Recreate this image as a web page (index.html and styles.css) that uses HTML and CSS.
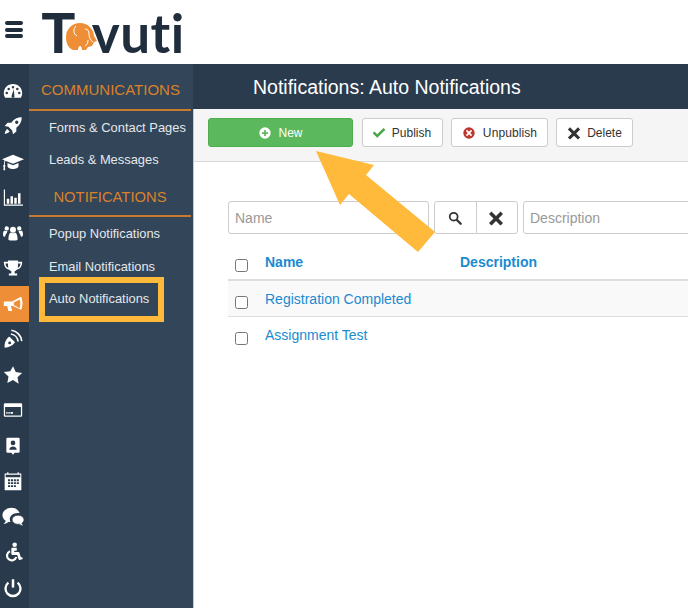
FILE: index.html
```html
<!DOCTYPE html>
<html lang="en">
<head>
    <meta charset="UTF-8">
    <meta name="viewport" content="width=device-width, initial-scale=1.0">
    <title>Notifications: Auto Notifications</title>
    <link rel="stylesheet" href="styles.css">
</head>
<body>
    <header class="topbar">
        <div class="burger"><span></span><span></span><span></span></div>
        <div class="logo">
            <span class="logo-t">T</span>
            <svg class="logo-mark" viewBox="0 0 32 28">
                <path fill="#ee8e37" d="M15 0a14 14 0 0 1 14 13l3 5-3 1-2 4-4 1-2 3h-4c0-2-1-4-2-4s-2 2-2 4H8C3 25 1 20 1 14A14 14 0 0 1 15 0z"/>
                <path fill="none" stroke="#fff" stroke-width="1" d="M11 3c-3 3-3 8 1 10M20 6c3 0 4 2 4 5s1 6 4 8M20 23c2-1 3-3 3-6"/>
            </svg>
            <span class="logo-rest">vuti</span>
        </div>
    </header>

    <div class="layout">
        <nav class="rail">
            <a class="rail-item"><svg viewBox="0 0 24 24"><path fill-rule="evenodd" d="M12 3.500C5.500 3.500 1 8.500 1 14.500c0 2 .6 4 1.500 5.500h19c.9-1.500 1.500-3.500 1.500-5.500 0-6-4.500-11-11-11zM12 6a1.500 1.500 0 1 1 0 3 1.500 1.500 0 0 1 0-3zM6.800 8a1.500 1.500 0 1 1 0 3 1.500 1.500 0 0 1 0-3zm10.400 0a1.500 1.500 0 1 1 0 3 1.500 1.500 0 0 1 0-3zM4.500 13a1.500 1.500 0 1 1 0 3 1.500 1.500 0 0 1 0-3zm15 0a1.500 1.500 0 1 1 0 3 1.500 1.500 0 0 1 0-3zM13 10l.6 7.500a1.800 1.800 0 1 1-3.200 0z"/></svg></a>
            <a class="rail-item"><svg viewBox="0 0 24 24"><path d="M22.500 1.500c-5 0-9.500 2-12.500 6.500H5.500L2 12l4.500 1 4.500 4.500 1 4.500 4-3.500V14c4.500-3 6.500-7.500 6.500-12.500zM16.500 5.500a2 2 0 1 1 0 4 2 2 0 0 1 0-4zM5 15.500c-1.500 1-2.500 3-3 6 3-.5 5-1.500 6-3z"/></svg></a>
            <a class="rail-item"><svg class="wide" viewBox="0 0 24 24"><path d="M12 4 0 9l2.600 1.100-.4 5a1.200 1.200 0 0 0-.4 2.200L1.500 21h2l-.3-3.700a1.200 1.200 0 0 0-.1-2l.4-4.800L12 14l12-5zM6 13v3.500c0 1.500 3 3 6 3s6-1.500 6-3V13l-6 2.500z"/></svg></a>
            <a class="rail-item"><svg viewBox="0 0 24 24"><path d="M1 3h1.400v18H24v1.500H1zM4.500 14h3v6h-3zM9 11h3v9H9zM13.500 13h3v7h-3zM18 7.500h3V20h-3z"/></svg></a>
            <a class="rail-item"><svg viewBox="0 0 24 24"><circle cx="12" cy="8" r="3.600"/><circle cx="4.500" cy="6.500" r="2.600"/><circle cx="19.500" cy="6.500" r="2.600"/><path d="M6.500 20c0-5 1-8 3-8.500 1.500 1 3.500 1 5 0 2 .5 3 3.500 3 8.500-2 1.500-9 1.500-11 0zM0 14c0-3 .5-4.500 2-5 1 .7 2 .8 3.500.5-.5.7-.8 1.500-.8 2.500-1.200 1-2 3-2.200 4.500C1.500 16.500 0 16 0 14zM24 14c0-3-.5-4.500-2-5-1 .7-2 .8-3.500.5.500.7.800 1.500.800 2.500 1.200 1 2 3 2.200 4.500 1 0 2.500-.500 2.500-2.500z"/></svg></a>
            <a class="rail-item"><svg viewBox="0 0 24 24"><path fill-rule="evenodd" d="M6 3h12v1.500h5c0 5-2 8.500-6.500 9.500-.8 1-1.700 1.600-2.500 2v2.500h3V21H7v-2.500h3V16c-.8-.4-1.700-1-2.500-2C3 13 1 9.500 1 4.500h5zM3 6.500c.2 2.500 1.200 4.300 3.300 5.300C6.200 10.500 6 8.500 6 6.500zm18 0h-3c0 2-.2 4-.3 5.300 2.100-1 3.100-2.800 3.300-5.300z"/></svg></a>
            <a class="rail-item active"><svg viewBox="0 0 24 24"><path fill-rule="evenodd" d="M1 9h10l10-5.500c1 0 1.500.5 1.500 1.500l1 6-1 6c0 1-.5 1.500-1.500 1.500L12 14.500H9.500L11 20.500H6.500L5 14.500H1zM20 6.500 13 10.300v2.900l7 3.800c.5-1.700.8-3.400.8-5.250S20.500 8.200 20 6.500z"/></svg></a>
            <a class="rail-item"><svg viewBox="0 0 24 24"><path fill-rule="evenodd" d="M2 22.500c-.5-5 .8-9.500 5.500-13.500l7 7c-3.500 4.500-7.500 6.500-12.500 6.500zm6-7.500a1.700 1.700 0 1 0 0 3.400A1.700 1.700 0 0 0 8 15z"/><path fill="none" stroke="#fff" stroke-width="2" d="M9.500 6a10 10 0 0 1 8.500 9M10 1.500a14.500 14.500 0 0 1 12.500 13"/></svg></a>
            <a class="rail-item"><svg viewBox="0 0 24 24"><path d="m12 1.500 3.300 7 7.700 1-5.600 5.300 1.400 7.700L12 18l-6.800 3.500 1.400-7.700L1 8.500l7.700-1z"/></svg></a>
            <a class="rail-item"><svg viewBox="0 0 24 24"><path fill-rule="evenodd" d="M2.500 4h19A1.500 1.500 0 0 1 23 5.500v13a1.500 1.500 0 0 1-1.500 1.500h-19A1.500 1.500 0 0 1 1 18.500v-13A1.500 1.500 0 0 1 2.500 4zm0 4.500v10h19v-10zM4 14.500h1.500v2H4zm2.500 0H8v2H6.500zm2.500 0h3v2H9z"/></svg></a>
            <a class="rail-item"><svg viewBox="0 0 24 24"><path fill-rule="evenodd" d="M5.500 2h13A1.500 1.500 0 0 1 20 3.500v15a1.500 1.500 0 0 1-1.500 1.500H14l-2 2.500-2-2.500H5.500A1.500 1.500 0 0 1 4 18.500v-15A1.500 1.500 0 0 1 5.500 2zM12 5.500a2.800 2.800 0 1 0 0 5.600 2.800 2.800 0 0 0 0-5.600zM7.500 16.500h9c0-2.500-2-4-4.500-4s-4.500 1.500-4.500 4z"/></svg></a>
            <a class="rail-item"><svg viewBox="0 0 24 24"><path fill-rule="evenodd" d="M2 3h3V1.500h1.500V3h11V1.500H19V3h3v20H2zm1.200 1.500v3h17.600v-3zM6 10h2.500v2.200H6zm3.500 0H12v2.200H9.500zM13 10h2.500v2.200H13zm3.500 0H19v2.200h-2.500zM6 13.500h2.500v2.200H6zm3.500 0H12v2.200H9.500zm3.500 0h2.500v2.200H13zm3.500 0H19v2.200h-2.500zM6 17h2.500v2.200H6zm3.500 0H12v2.200H9.500zm3.500 0h2.500v2.200H13z"/></svg></a>
            <a class="rail-item"><svg class="wide" viewBox="0 0 24 24"><path d="M10.500 2C5 2 .5 5.500.5 10c0 2.500 1.300 4.500 3.500 6-.3 1.300-1 2.500-2.500 3.500 2.500 0 4.500-.8 6-2.200.6.100 1.200.2 1.800.2-.5-1-.8-2-.8-3 0-4 3.800-7 8.500-7 .8 0 1.500.1 2.200.3C18 4 14.500 2 10.500 2z"/><path d="M17.500 10c-3.600 0-6.500 2.300-6.500 5s2.900 5 6.500 5c.5 0 1-.1 1.500-.2 1 1 2.500 1.700 4.500 1.700-.9-.7-1.500-1.700-1.700-2.800 1.300-1 2.200-2.300 2.200-3.700 0-2.700-2.900-5-6.500-5z" stroke="#283a4b" stroke-width=".8"/></svg></a>
            <a class="rail-item"><svg viewBox="0 0 24 24"><circle cx="14" cy="3.200" r="2.700"/><path d="M11 7h5.500v3.500h-3V12H18c1 0 1.500.5 1.800 1.200l1.700 5.300 1.500-.5.700 2.300-3.500 1.200a1.200 1.200 0 0 1-1.500-.7L17 15.500h-5.500A1.500 1.500 0 0 1 10 14V8a1 1 0 0 1 1-1z"/><path fill="none" stroke="#fff" stroke-width="2.600" d="M8.500 11a5.700 5.700 0 1 0 7.500 7"/></svg></a>
            <a class="rail-item"><svg viewBox="0 0 24 24"><path d="M10.500 1.500h3v10h-3z"/><path fill="none" stroke="#fff" stroke-width="2.800" d="M6.500 5.500a9 9 0 1 0 11 0"/></svg></a>
        </nav>

        <aside class="panel">
            <h3 class="panel-title">COMMUNICATIONS</h3>
            <a class="panel-link first">Forms &amp; Contact Pages</a>
            <a class="panel-link">Leads &amp; Messages</a>
            <h3 class="panel-title center">NOTIFICATIONS</h3>
            <a class="panel-link">Popup Notifications</a>
            <a class="panel-link">Email Notifications</a>
            <a class="panel-link highlighted">Auto Notifications</a>
        </aside>

        <main class="content">
            <div class="title-bar"><h1>Notifications: Auto Notifications</h1></div>

            <div class="toolbar">
                <button class="btn btn-new">
                    <svg class="ico" viewBox="0 0 16 16"><path fill="#fff" fill-rule="evenodd" d="M8 1.500a6.500 6.500 0 1 1 0 13 6.500 6.500 0 0 1 0-13zM7 4.500V7H4.500v2H7v2.500h2V9h2.500V7H9V4.500z"/></svg>
                    New
                </button>
                <button class="btn btn-publish">
                    <svg class="ico" viewBox="0 0 16 16"><path fill="#46a546" d="M6 13.500.8 8.300l2-2L6 9.500l7.200-7.200 2 2z"/></svg>
                    Publish
                </button>
                <button class="btn btn-unpublish">
                    <svg class="ico" viewBox="0 0 16 16"><path fill="#bd362f" fill-rule="evenodd" d="M8 1.500a6.500 6.500 0 1 1 0 13 6.500 6.500 0 0 1 0-13zM5.800 4.400 4.400 5.800 6.600 8l-2.200 2.200 1.400 1.400L8 9.400l2.200 2.200 1.400-1.400L9.400 8l2.200-2.200-1.400-1.400L8 6.600z"/></svg>
                    Unpublish
                </button>
                <button class="btn btn-delete">
                    <svg class="ico" viewBox="0 0 16 16"><path fill="#333" d="M3.500 1.500 8 6l4.500-4.500 2.500 2.500L10.500 8.500 15 13l-2.500 2.500L8 11l-4.500 4.500L1 13l4.500-4.500L1 4z"/></svg>
                    Delete
                </button>
            </div>

            <div class="list-area">
                <div class="filters">
                    <input class="field field-name" type="text" placeholder="Name">
                    <div class="btn-group">
                        <button class="filter-btn filter-search">
                            <svg class="ico" viewBox="0 0 16 16"><circle cx="6.500" cy="6.500" r="4.500" fill="none" stroke="#333" stroke-width="2"/><path fill="none" stroke="#333" stroke-width="2.600" stroke-linecap="round" d="m10.500 10.500 4 4"/></svg>
                        </button>
                        <button class="filter-btn filter-clear">
                            <svg class="ico ico-big" viewBox="0 0 16 16"><path fill="#333" d="M3.500 1.500 8 6l4.500-4.500 2.500 2.500L10.500 8.500 15 13l-2.500 2.500L8 11l-4.500 4.500L1 13l4.500-4.500L1 4z"/></svg>
                        </button>
                    </div>
                    <input class="field field-desc" type="text" placeholder="Description">
                </div>

                <table class="list">
                    <thead>
                        <tr>
                            <th class="check"><input type="checkbox"></th>
                            <th class="col-name"><a>Name</a></th>
                            <th><a>Description</a></th>
                        </tr>
                    </thead>
                    <tbody>
                        <tr class="odd">
                            <td class="check"><input type="checkbox"></td>
                            <td><a>Registration Completed</a></td>
                            <td></td>
                        </tr>
                        <tr>
                            <td class="check"><input type="checkbox"></td>
                            <td><a>Assignment Test</a></td>
                            <td></td>
                        </tr>
                    </tbody>
                </table>
            </div>
        </main>
    </div>

    <!-- callout arrow pointing at the New button -->
    <svg class="callout" viewBox="0 0 688 608">
        <path fill="#ffb93b" d="M316 151l58 14-8 10 69 57-17 20-69-58-9 11z"/>
    </svg>
</body>
</html>
```

FILE: styles.css
```css
*, *::before, *::after {
    box-sizing: border-box;
}
html, body {
    height: 100%;
}
body {
    margin: 0;
    overflow: hidden;
    position: relative;
    font-family: "Liberation Sans", Arial, sans-serif;
    background-color: #fff;
    color: #333;
}

/* top white bar */
.topbar {
    height: 64px;
    display: flex;
    align-items: flex-start;
    background-color: #fff;
}
.burger {
    width: 18px;
    margin: 21px 0 0 5px;
    display: flex;
    flex-direction: column;
    gap: 2.500px;
}
.burger span {
    height: 4px;
    border-radius: 2px;
    background-color: #1f2d3d;
}
.logo {
    display: flex;
    align-items: baseline;
    margin: 1px 0 0 18px;
    height: 63px;
    color: #1f2d3d;
}
.logo-t {
    font-family: Roboto, sans-serif;
    font-weight: 700;
    font-size: 56px;
    line-height: 63px;
}
.logo-mark {
    align-self: flex-start;
    width: 32px;
    height: 28px;
    margin: 22px 0 0 -11px;
    flex: none;
}
.logo-rest {
    margin-left: -5px;
    font-family: Lato, sans-serif;
    font-weight: 700;
    font-size: 53px;
    line-height: 63px;
    letter-spacing: .5px;
}

.layout {
    height: 544px;
    display: flex;
}

/* icon rail */
.rail {
    width: 29px;
    flex: none;
    padding-top: 9px;
    background-color: #283a4b;
}
.rail-item {
    height: 35.500px;
    padding-right: 3px;
    display: flex;
    align-items: center;
    justify-content: center;
}
.rail-item svg {
    width: 20px;
    height: 20px;
    flex: none;
    fill: #fff;
}
.rail-item svg.wide {
    width: 22px;
    height: 22px;
}
.rail-item.active {
    background-color: #ee8e37;
}

/* sub menu */
.panel {
    width: 164px;
    flex: none;
    padding: 10px 2px 0 0;
    background-color: #334558;
}
.panel-title {
    margin: 0;
    height: 37px;
    padding: 1px 0 0 12px;
    font-size: 15px;
    font-weight: 400;
    line-height: 30px;
    color: #d9822b;
    border-bottom: 2px solid #c97a30;
}
.panel-title.center {
    height: 41.500px;
    padding: 1px 0 0;
    line-height: 41px;
    font-size: 14.800px;
    text-align: center;
}
.panel-link {
    display: block;
    height: 32.500px;
    padding-left: 20px;
    font-size: 12.900px;
    line-height: 34px;
    color: #e4e8ec;
    white-space: nowrap;
}
.panel-link.first {
    height: 32px;
}
.panel-link.highlighted {
    position: relative;
}
.panel-link.highlighted::after {
    content: "";
    position: absolute;
    left: 10px;
    top: -5px;
    width: 125px;
    height: 45px;
    border: 6px solid #ffb93b;
}

/* main column */
.content {
    flex: 1;
    min-width: 0;
}
.title-bar {
    height: 45px;
    background-color: #2a3b4e;
}
.title-bar h1 {
    margin: 0;
    padding-left: 60px;
    font-size: 19.500px;
    font-weight: 400;
    line-height: 46px;
    color: #fff;
}
.toolbar {
    height: 53px;
    padding: 9px 0 0 14px;
    display: flex;
    align-items: flex-start;
    gap: 8px;
    background-color: #f5f5f5;
    border-bottom: 1px solid #d9d9d9;
    border-left: 1px solid #c5c9cd;
}
.btn {
    height: 29px;
    padding: 0;
    display: flex;
    align-items: center;
    justify-content: center;
    gap: 6px;
    font-family: inherit;
    font-size: 12px;
    color: #333;
    background-color: #fff;
    border: 1px solid #ccc;
    border-radius: 3px;
}
.btn-new {
    width: 145px;
    margin-right: 1px;
    color: #fff;
    background-color: #5cb85c;
    border-color: #4cae4c;
}
.btn-publish {
    width: 81px;
    padding-right: 2px;
}
.btn-unpublish {
    width: 97px;
    gap: 7px;
    letter-spacing: .1px;
}
.btn-delete {
    width: 77px;
}
.ico {
    width: 14px;
    height: 14px;
}
.ico-big {
    width: 16px;
    height: 16px;
}

.list-area {
    padding: 39px 0 0 34px;
    border-left: 1px solid #c5c9cd;
    height: 454px;
}
.filters {
    display: flex;
    width: 600px;
    gap: 5px;
}
.field {
    height: 33px;
    padding: 0 6px;
    font-family: inherit;
    font-size: 14px;
    background-color: #fff;
    border: 1px solid #ccc;
    border-radius: 3px;
}
.field::placeholder {
    color: #999;
}
.field-name {
    width: 201px;
}
.field-desc {
    width: 200px;
}
.btn-group {
    display: flex;
}
.filter-btn {
    height: 33px;
    padding: 0;
    display: flex;
    align-items: center;
    justify-content: center;
    background-color: #fff;
    border: 1px solid #ccc;
}
.filter-search {
    width: 43px;
    padding-right: 2px;
    border-radius: 3px 0 0 3px;
}
.filter-clear {
    width: 42px;
    margin-left: -1px;
    padding-right: 3px;
    border-radius: 0 3px 3px 0;
}

.list {
    margin-top: 10px;
    width: 600px;
    border-collapse: collapse;
    font-size: 14px;
}
.list th {
    height: 36px;
    padding: 0 8px;
    text-align: left;
    border-bottom: 2px solid #ddd;
}
.list td {
    height: 36px;
    padding: 2px 8px 0;
    border-bottom: 1px solid #ddd;
}
.list tbody tr:last-child td {
    border-bottom: 0;
}
.list tr.odd td {
    background-color: #f9f9f9;
}
.list a {
    color: #1a8bd0;
}
.list .check {
    width: 29px;
    padding: 8px 0 0 7px;
}
.list input {
    margin: 0;
    display: block;
    width: 13px;
    height: 13px;
}
.list .col-name {
    width: 195px;
}

.callout {
    position: absolute;
    left: 0;
    top: 0;
    width: 688px;
    height: 608px;
    pointer-events: none;
}
```
